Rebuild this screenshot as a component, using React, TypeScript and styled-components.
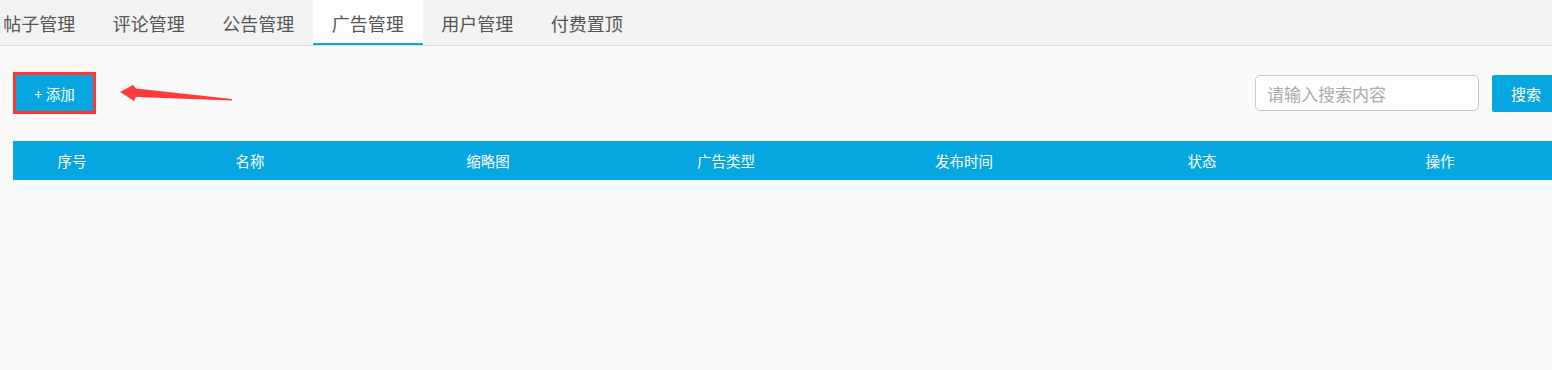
import React from "react";
import styled, { createGlobalStyle } from "styled-components";

const GlobalStyle = createGlobalStyle`
  body {
    margin: 0;
    background-color: #fafafa;
    font-family: "Noto Sans CJK SC", "Noto Sans", sans-serif;
    overflow: hidden;
  }
`;

const Page = styled.div`
  width: 1552px;
  height: 370px;
  background-color: #fafafa;
`;

const TabBar = styled.div`
  display: flex;
  height: 45px;
  background-color: #f2f2f2;
  border-bottom: 1px solid #dddddd;
`;

const TabList = styled.div`
  display: flex;
  margin-left: -15.5px;
`;

const Tab = styled.div<{ active?: boolean }>`
  display: flex;
  align-items: center;
  padding: 2px 18.75px 0;
  height: 45px;
  box-sizing: border-box;
  font-size: 18px;
  color: #555;
  background-color: ${({ active }) => (active ? "#ffffff" : "transparent")};
  border-bottom: 2px solid ${({ active }) => (active ? "#06a7e0" : "transparent")};
`;

const Content = styled.div`
  padding-left: 13px;
  width: 1547px;
`;

const Toolbar = styled.div`
  display: flex;
  align-items: center;
  justify-content: space-between;
  margin-top: 26px;
  height: 42px;
`;

const LeftGroup = styled.div`
  display: flex;
  align-items: center;
`;

const AddButton = styled.button`
  width: 77px;
  height: 36px;
  box-sizing: content-box;
  border: 3px solid #ff3535;
  background-color: #06a7e0;
  color: #fff;
  font-family: inherit;
  font-size: 14.5px;
  padding: 0;
  cursor: pointer;
`;

const Arrow = styled.svg`
  margin-left: 22px;
  display: block;
`;

const SearchGroup = styled.div`
  display: flex;
  align-items: center;
  gap: 13px;
`;

const SearchInput = styled.input`
  width: 224px;
  height: 36px;
  box-sizing: border-box;
  border: 1px solid #c8c8c8;
  border-radius: 5px;
  background-color: #fff;
  padding: 0 11px;
  font-family: inherit;
  font-size: 17px;
  outline: none;

  &::placeholder {
    color: #aaa;
  }
`;

const SearchButton = styled.button`
  width: 68px;
  height: 37px;
  border: none;
  border-radius: 2px;
  background-color: #06a7e0;
  color: #fff;
  font-family: inherit;
  font-size: 15px;
  padding: 0;
  cursor: pointer;
`;

const TableHead = styled.div`
  display: grid;
  grid-template-columns: 118px repeat(6, 238px);
  margin-top: 27px;
  height: 39px;
  background-color: #06a7e0;
`;

const HeadCell = styled.div`
  display: flex;
  align-items: center;
  justify-content: center;
  color: #fff;
  font-size: 14.5px;
`;

const tabs = ["帖子管理", "评论管理", "公告管理", "广告管理", "用户管理", "付费置顶"];
const columns = ["序号", "名称", "缩略图", "广告类型", "发布时间", "状态", "操作"];

export default function App() {
  return (
    <Page>
      <GlobalStyle />
      <TabBar>
        <TabList>
          {tabs.map((t) => (
            <Tab key={t} active={t === "广告管理"}>
              {t}
            </Tab>
          ))}
        </TabList>
      </TabBar>
      <Content>
        <Toolbar>
          <LeftGroup>
            <AddButton>+ 添加</AddButton>
            <Arrow width="116" height="22" viewBox="0 0 116 22">
              <polygon
                points="2,10 15,3 18,6.5 114,17 114,18.5 18,15 16,19"
                fill="#ff3b3b"
              />
            </Arrow>
          </LeftGroup>
          <SearchGroup>
            <SearchInput placeholder="请输入搜索内容" />
            <SearchButton>搜索</SearchButton>
          </SearchGroup>
        </Toolbar>
        <TableHead>
          {columns.map((c) => (
            <HeadCell key={c}>{c}</HeadCell>
          ))}
        </TableHead>
      </Content>
    </Page>
  );
}
